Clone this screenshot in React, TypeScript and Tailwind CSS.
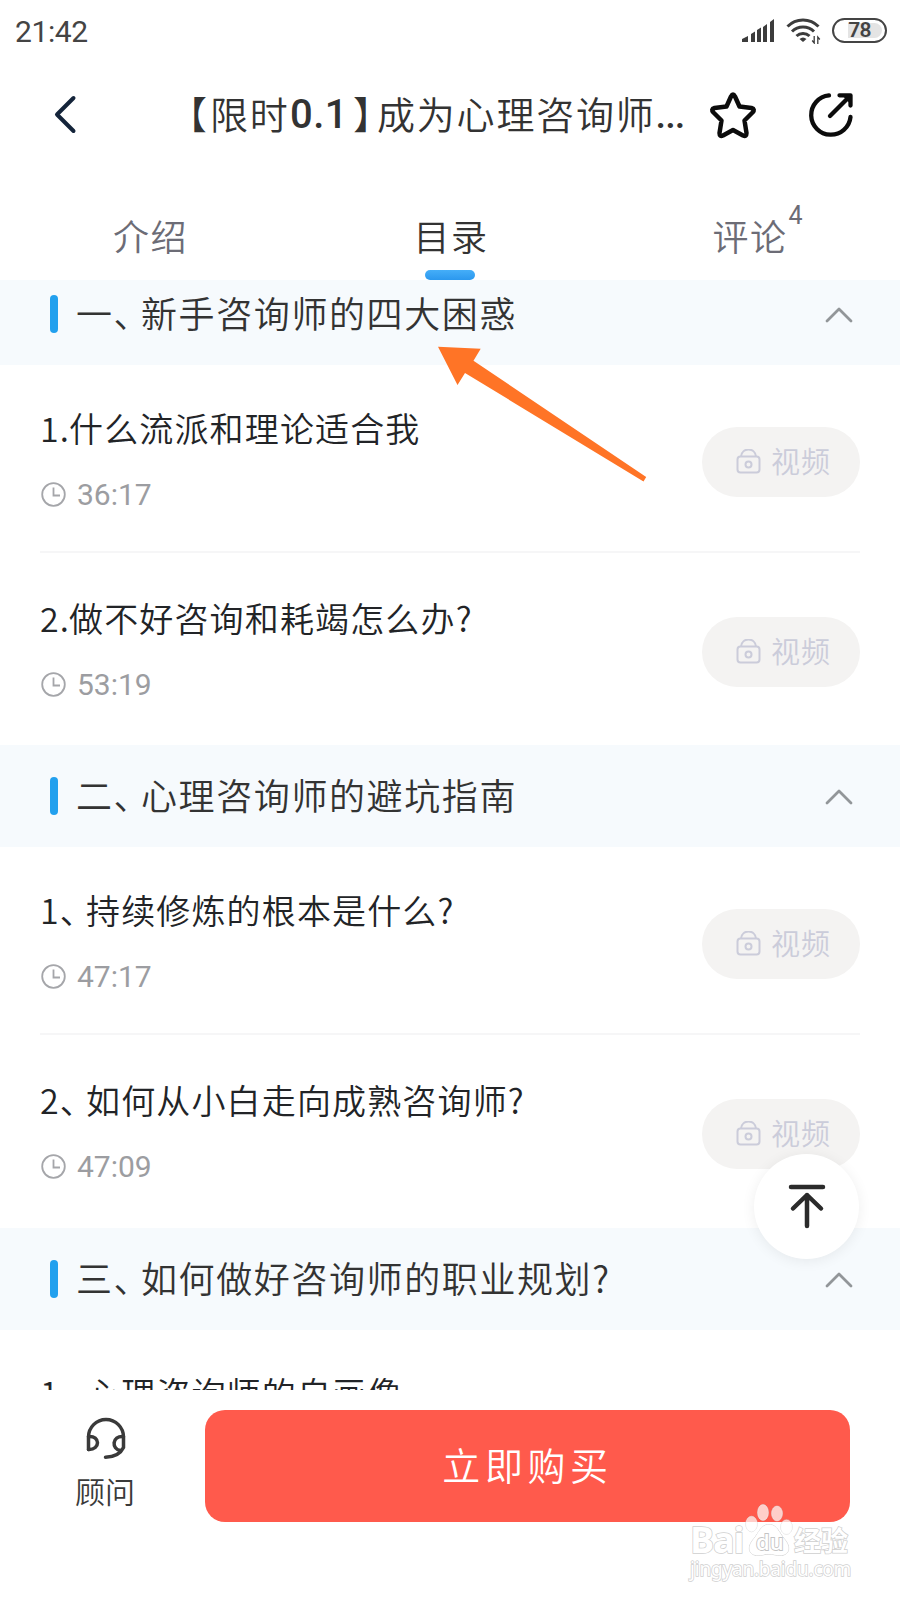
import React from 'react';

interface Lesson {
  prefix: string;
  prefixClass: string;
  title: string;
  duration: string;
}

interface Chapter {
  index: string;
  title: string;
  lessons: Lesson[];
}

const DOT = 'w-[29px]';
const COMMA = 'w-[46px]';

const chapters: Chapter[] = [
  {
    index: '一、',
    title: '新手咨询师的四大困惑',
    lessons: [
      { prefix: '1.', prefixClass: DOT, title: '什么流派和理论适合我', duration: '36:17' },
      { prefix: '2.', prefixClass: DOT, title: '做不好咨询和耗竭怎么办?', duration: '53:19' },
    ],
  },
  {
    index: '二、',
    title: '心理咨询师的避坑指南',
    lessons: [
      { prefix: '1、', prefixClass: COMMA, title: '持续修炼的根本是什么?', duration: '47:17' },
      { prefix: '2、', prefixClass: COMMA, title: '如何从小白走向成熟咨询师?', duration: '47:09' },
    ],
  },
  {
    index: '三、',
    title: '如何做好咨询师的职业规划?',
    lessons: [{ prefix: '1、', prefixClass: COMMA, title: '心理咨询师的自画像', duration: '45:20' }],
  },
];

const StatusBar: React.FC = () => (
  <div className="flex h-[60px] shrink-0 items-center pl-[15px] pr-[13px] text-[#444]">
    <span className="flex-1 pt-[3px] font-[Roboto] text-[30px] font-normal leading-none tracking-[-0.400px]">21:42</span>
    <svg className="mr-[12px]" width="33" height="24" viewBox="0 0 33 24" fill="#3c3c3c">
      <path d="M1 24v-3l6-3v6zM10 24v-8l4-2.5V24zM16 24V12l4-2.5V24zM22 24V9l4-3v18zM29 24V4l4-3v23z" />
    </svg>
    <svg className="mr-[11px]" width="35" height="27" viewBox="0 0 35 27" fill="none" stroke="#3c3c3c" strokeWidth="3">
      <path d="M1.5 9.5a21.5 21.5 0 0 1 31 0M6 14.5a15.5 15.5 0 0 1 22 0M10.500 19a9.500 9.500 0 0 1 13 0" />
      <path d="M13.500 22q3.500-3 7 0l-3.500 3z" fill="#3c3c3c" stroke="none" />
      <path d="M28.200 19v7l-2-2.500M31.800 27v-7l2 2.500" strokeWidth="1.300" />
    </svg>
    <div className="flex h-[25px] w-[55px] items-center rounded-full border-2 border-[#444] p-[3px]">
      <div className="flex h-full w-full items-center justify-center rounded-full bg-linear-to-r from-white from-25% to-[#e4e4e4] to-25% font-[Roboto] text-[21px] font-semibold leading-none tracking-[-0.8px]">
        78
      </div>
    </div>
  </div>
);

const NavBar: React.FC = () => (
  <div className="flex h-[110px] shrink-0 items-center pl-[53px] pr-[46px]">
    <svg width="24" height="40" viewBox="0 0 24 40" fill="none" stroke="#14243a" strokeWidth="4" strokeLinecap="round" strokeLinejoin="round">
      <path d="M20.500 3L4 19.500 20.500 36" />
    </svg>
    <h1 className="ml-[111px] flex flex-1 items-center whitespace-nowrap text-[38px] leading-none tracking-[1.800px] text-[#333] [font-feature-settings:'halt']">
      <span className="w-[22px] pb-[5px]">【</span>
      <span className="w-[80px] pb-[5px]">限时</span>
      <span className="w-[63px] font-[Roboto] text-[40px] font-medium tracking-[0.500px]">0.1</span>
      <span className="w-[24px] pb-[5px]">】</span>
      <span className="pb-[5px]">成为心理咨询师</span>
      <span className="font-[Roboto] font-medium tracking-[-1px]">...</span>
    </h1>
    <svg className="mr-[51px]" width="48" height="48" viewBox="0 0 48 48" fill="none" stroke="#0c0c0c" strokeWidth="4.500" strokeLinejoin="round">
      <path d="M22 5.500Q24 1.500 26 5.500L30.500 15.500 42.500 17Q46.500 18 43.500 21.500L35.500 29.500 37.500 42Q37.500 46 34 44.500L24 39 14 44.500Q10.500 46 10.500 42L12.500 29.500 4.500 21.500Q1.500 18 5.500 17L17.500 15.500z" />
    </svg>
    <svg width="46" height="46" viewBox="0 0 46 46" fill="none" stroke="#0c0c0c" strokeWidth="4.300" strokeLinecap="round" strokeLinejoin="round">
      <path d="M21 3.400A19.700 19.700 0 1 0 42.500 25M22 24L41 5M31.500 3.300H42.500V13.500" />
      <path d="M34 3.300H42.500V12z" fill="#0c0c0c" stroke="none" />
    </svg>
  </div>
);

const Tabs: React.FC = () => (
  <div className="grid h-[110px] shrink-0 grid-cols-3 text-[36px] leading-none tracking-[1.500px] text-[#6c6c76]">
    <div className="flex justify-center pl-px pt-[47px]">介绍</div>
    <div className="flex flex-col items-center justify-between pt-[47px] text-[#333]">
      <span className="pl-[2px]">目录</span>
      <span className="h-[10px] w-[50px] rounded-full bg-linear-to-b from-[#45aef8] to-[#2b98ee]" />
    </div>
    <div className="flex justify-center pt-[47px]">
      <span className="relative">
        评论
        <sup className="absolute left-[76px] top-[-14px] font-[Roboto] text-[25px] font-normal leading-none">4</sup>
      </span>
    </div>
  </div>
);

const VideoPill: React.FC = () => (
  <div className="flex h-[70px] w-[158px] items-center rounded-full bg-[#f4f3f2] pl-[34px] text-[29px] leading-none tracking-[1px] text-[#cbccda]">
    <svg className="mr-[10px]" width="25" height="26" viewBox="0 0 25 26" fill="none" stroke="#cbccda" strokeWidth="2">
      <rect x="1.500" y="7.500" width="22" height="16" rx="3" />
      <path d="M5 7.500C6-1.800 19-1.800 20 7.500" />
      <circle cx="12.500" cy="15.500" r="3" />
    </svg>
    <span className="pb-[4px]">视频</span>
  </div>
);

const LessonRow: React.FC<{ lesson: Lesson }> = ({ lesson }) => (
  <div className="mx-[40px] flex h-[190px] shrink-0">
    <div className="flex-1 pt-[46px]">
      <div className="flex whitespace-nowrap text-[34px] leading-[34px] tracking-[1.150px] text-[#222427]">
        <span className={`shrink-0 [font-feature-settings:'halt'] ${lesson.prefixClass}`}>{lesson.prefix}</span>
        {lesson.title}
      </div>
      <div className="mt-[32px] flex items-center gap-[11px] font-[Roboto] text-[30px] font-normal leading-[32px] text-[#9c9da1]">
        <svg className="ml-[1px]" width="25" height="25" viewBox="0 0 25 25" fill="none" stroke="#a5a6aa" strokeWidth="1.800">
          <circle cx="12.500" cy="12.500" r="11.300" />
          <path d="M12.500 5.500v8h6.500" />
        </svg>
        <span className="pt-[2px]">{lesson.duration}</span>
      </div>
    </div>
    <div className="pt-[62px]">
      <VideoPill />
    </div>
  </div>
);

const ChapterBlock: React.FC<{ chapter: Chapter }> = ({ chapter }) => (
  <section className="shrink-0 last:pt-px">
    <div className="flex h-[102px] items-center bg-[#f6fafd] pl-[50px] pr-[47px] text-[36px] leading-none tracking-[1.600px] text-[#333]">
      <span className="mr-[18px] h-[38px] w-[8px] rounded-[4px] bg-[#22a0ee]" />
      <span className="w-[65px] whitespace-nowrap pb-[4px] [font-feature-settings:'halt']">{chapter.index}</span>
      <span className="flex-1 pb-[4px]">{chapter.title}</span>
      <svg width="28" height="17" viewBox="0 0 28 17" fill="none" stroke="#929699" strokeWidth="2.800" strokeLinecap="round" strokeLinejoin="round">
        <path d="M2 15L14 3l12 12" />
      </svg>
    </div>
    {chapter.lessons.map((lesson, idx) => (
      <React.Fragment key={lesson.title}>
        {idx > 0 && <hr className="mx-[40px] -mt-[4px] mb-[2px] h-[2px] border-0 bg-[#f6f6f7]" />}
        <LessonRow lesson={lesson} />
      </React.Fragment>
    ))}
  </section>
);

const BottomBar: React.FC = () => (
  <div className="flex h-[210px] shrink-0 items-start bg-white pr-[50px] pt-[20px]">
    <div className="flex w-[205px] flex-col items-center pl-[5px] pt-[5px] text-[30px] leading-none text-[#3a3a3a]">
      <svg className="ml-px" width="44" height="46" viewBox="0 0 44 46" fill="none" stroke="#3a3a3a" strokeWidth="3.500" strokeLinecap="round" strokeLinejoin="round">
        <path d="M4.500 34.500V22a17.500 17.500 0 0 1 35 0V32.500Q35 42 21.500 42.200" />
        <path d="M4.500 21.500c12-1 12 13.500 0 13M39.500 21.500c-12-1-12 13-3 14" />
      </svg>
      <span className="mt-[14px]">顾问</span>
    </div>
    <button className="h-[112px] flex-1 rounded-[20px] bg-[#ff5a4c] pb-[4px] text-[38px] leading-none tracking-[4.600px] text-white">
      立即购买
    </button>
  </div>
);

const Watermark: React.FC = () => (
  <div className="absolute left-[690px] top-[1502px] w-[165px] text-white [-webkit-text-stroke:1.500px_#cfcfcf] [paint-order:stroke]">
    <div className="flex h-[54px] items-end leading-none">
      <span className="w-[55px] font-['Open_Sans'] text-[36px] font-bold leading-[32px] tracking-[-1.200px]">Bai</span>
      <svg className="shrink-0" width="48" height="54" viewBox="2 0 48 54">
        <g fill="#fff" fillOpacity=".7" stroke="#cfcfcf" strokeOpacity=".6">
          <ellipse cx="8.500" cy="22" rx="5.800" ry="7.800" />
          <ellipse cx="20" cy="10.500" rx="5.500" ry="8" />
          <ellipse cx="34" cy="11.500" rx="5.500" ry="7.500" />
          <ellipse cx="43.500" cy="25" rx="5.800" ry="7.300" />
        </g>
        <path d="M26 22.500c8 0 10 8 15 14 8 9 5 17-4 17-4 0-7-1.500-11-1.500s-7 1.500-11 1.500c-9 0-12-8-4-17 5-6 7-14 15-14z" fill="#fff" fillOpacity=".95" stroke="#cfcfcf" />
        <text x="13" y="48" fontFamily="Open Sans" fontSize="22" fontWeight="600" fill="#fff" stroke="#c4c4c4" strokeWidth="1.800">du</text>
      </svg>
      <span className="whitespace-nowrap pb-px pl-px font-['Noto_Sans_CJK_SC',sans-serif] text-[27px] font-bold leading-[30px]">经验</span>
    </div>
    <div className="mt-[1px] whitespace-nowrap font-['Noto_Sans'] text-[19px] font-normal leading-[24px] tracking-[-0.200px]">jingyan.baidu.com</div>
  </div>
);

export default function App() {
  return (
    <div className="relative flex h-[1600px] w-[900px] flex-col overflow-hidden bg-white font-['Noto_Sans_CJK_SC',sans-serif] font-[350]">
      <StatusBar />
      <NavBar />
      <Tabs />
      <main className="flex h-[1110px] shrink-0 flex-col overflow-hidden">
        <div className="-mt-[17px]">
          {chapters.map(chapter => (
            <ChapterBlock key={chapter.index} chapter={chapter} />
          ))}
        </div>
      </main>
      <BottomBar />

      <svg className="absolute left-[436px] top-[345px]" width="214" height="140" viewBox="436 345 214 140" fill="#ff7426">
        <path d="M438 346.800L480.700 348.700 473.500 360.700 646.200 477 643.500 481.500 465 373 457.500 385z" />
      </svg>

      <button className="absolute left-[754px] top-[1154px] flex h-[105px] w-[105px] items-center justify-center rounded-full bg-white pb-[2px] shadow-[0_2px_14px_rgba(0,0,0,0.07)]">
        <svg width="40" height="46" viewBox="0 0 40 46" fill="none" stroke="#2b2b2b" strokeWidth="4.500" strokeLinecap="round" strokeLinejoin="round">
          <path d="M4 4h32M20 43V12M6 25.500L20 12l14 13.500" />
        </svg>
      </button>

      <Watermark />
    </div>
  );
}
